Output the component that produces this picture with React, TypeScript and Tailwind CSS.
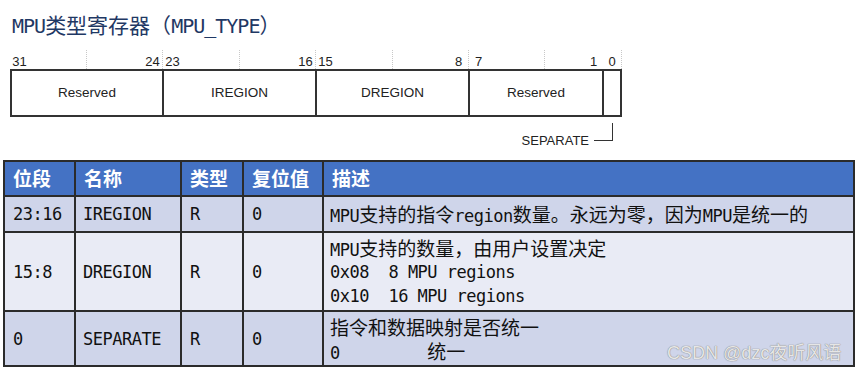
import React from 'react'

// split a string into ASCII / CJK runs so the Latin part can sit at half width
function Mixed({ text, latin, cjk }: { text: string; latin: string; cjk: string }) {
  const parts = text.match(/[\x00-\x7f]+|[^\x00-\x7f]+/g) ?? []
  return (
    <>
      {parts.map((p, i) =>
        /^[\x00-\x7f]/.test(p) ? (
          <span key={i} className={latin}>
            {p}
          </span>
        ) : (
          <span key={i} className={cjk}>
            {p}
          </span>
        )
      )}
    </>
  )
}

const bodyLatin = "inline-block leading-[24px] font-['DejaVu_Sans_Mono',monospace] text-[17px] tracking-[-0.5px]"
const bodyCjk = "inline-block leading-[24px] font-['Noto_Sans_CJK_SC',sans-serif] text-[19px]"

function Body({ text }: { text: string }) {
  return <Mixed text={text} latin={bodyLatin} cjk={bodyCjk} />
}

interface Row {
  bits: string
  name: string
  type: string
  reset: string
  desc: string[]
  bg: string
}

const rows: Row[] = [
  {
    bits: '23:16',
    name: 'IREGION',
    type: 'R',
    reset: '0',
    desc: ['MPU支持的指令region数量。永远为零，因为MPU是统一的'],
    bg: 'bg-[#cfd5ea]',
  },
  {
    bits: '15:8',
    name: 'DREGION',
    type: 'R',
    reset: '0',
    desc: ['MPU支持的数量，由用户设置决定', '0x08  8 MPU regions', '0x10  16 MPU regions'],
    bg: 'bg-[#e9ebf5]',
  },
  {
    bits: '0',
    name: 'SEPARATE',
    type: 'R',
    reset: '0',
    desc: ['指令和数据映射是否统一', '0         统一'],
    bg: 'bg-[#cfd5ea]',
  },
]

function BitLabel({ n }: { n: string }) {
  return <span className="w-[19px] text-center">{n}</span>
}

export default function App() {
  return (
    <div className="relative w-[863px] h-[373px] overflow-hidden bg-white text-[#111]">
      {/* Title */}
      <div className="pt-[10px] pl-[12px] h-[50px] leading-[28px] text-[#1f3864]">
        <Mixed
          text="MPU类型寄存器（MPU_TYPE）"
          latin="font-['DejaVu_Sans_Mono',monospace] text-[20px] tracking-[-1px]"
          cjk="font-['Noto_Sans_CJK_SC',sans-serif] text-[21px]"
        />
      </div>

      {/* Register diagram */}
      <div className="pl-[10px] font-['Liberation_Sans',Arial,sans-serif] text-[#222]">
        <div className="flex h-[19px] items-end text-[13px] leading-[15px]">
          <div className="flex w-[77px] h-full items-end border-r border-dotted border-[#c8c8c8]"><BitLabel n="31" /></div>
          <div className="flex w-[76px] h-full items-end justify-end border-r border-dotted border-[#c8c8c8]"><BitLabel n="24" /></div>
          <div className="flex w-[77px] h-full items-end border-r border-dotted border-[#c8c8c8]"><BitLabel n="23" /></div>
          <div className="flex w-[76px] h-full items-end justify-end border-r border-dotted border-[#c8c8c8]"><BitLabel n="16" /></div>
          <div className="flex w-[77px] h-full items-end border-r border-dotted border-[#c8c8c8]"><BitLabel n="15" /></div>
          <div className="flex w-[76px] h-full items-end justify-end border-r border-dotted border-[#c8c8c8]"><BitLabel n="8" /></div>
          <div className="flex w-[76px] h-full items-end border-r border-dotted border-[#c8c8c8]"><BitLabel n="7" /></div>
          <div className="flex w-[58px] h-full items-end justify-end"><BitLabel n="1" /></div>
          <div className="flex w-[19px] h-full items-end border-r border-dotted border-[#c8c8c8]"><BitLabel n="0" /></div>
        </div>
        <div className="flex w-[612px] h-[48px] border-2 border-[#333] text-[13.5px]">
          <div className="flex w-[152px] items-center justify-center border-r-2 border-[#333]">Reserved</div>
          <div className="flex w-[153px] items-center justify-center border-r-2 border-[#333]">IREGION</div>
          <div className="flex w-[153px] items-center justify-center border-r-2 border-[#333]">DREGION</div>
          <div className="flex w-[134px] items-center justify-center border-r-2 border-[#333]">Reserved</div>
          <div className="w-[16px]" />
        </div>
        <div className="flex w-[612px] h-[43px] justify-end pr-[9px]">
          <span className="mt-[17px] h-[14px] text-[13px] leading-[14px] mr-[5px]">SEPARATE</span>
          <div className="mt-[6px] w-[19px] h-[18px] border-r border-b border-[#333]" />
        </div>
      </div>

      {/* Field table */}
      <div className="ml-[3px] grid w-[852px] grid-cols-[69px_104px_60px_78px_529px] grid-rows-[33px_34px_77px_53px] gap-[2px] bg-[#2b2b2b] p-[2px]">
        {['位段', '名称', '类型', '复位值', '描述'].map((h) => (
          <div
            key={h}
            className="flex items-center bg-[#4472c4] pl-[8px] font-['Noto_Sans_CJK_SC',sans-serif] text-[19px] font-bold text-white"
          >
            {h}
          </div>
        ))}
        {rows.map((r) => (
          <React.Fragment key={r.bits}>
            <div className={`flex items-center pl-[8px] ${r.bg}`}><Body text={r.bits} /></div>
            <div className={`flex items-center pl-[7px] ${r.bg}`}><Body text={r.name} /></div>
            <div className={`flex items-center pl-[8px] ${r.bg}`}><Body text={r.type} /></div>
            <div className={`flex items-center pl-[8px] ${r.bg}`}><Body text={r.reset} /></div>
            <div className={`flex flex-col justify-center pl-[6px] ${r.bg}`}>
              {r.desc.map((line) => (
                <div key={line} className="h-[24px] leading-[24px] whitespace-pre">
                  <Body text={line} />
                </div>
              ))}
            </div>
          </React.Fragment>
        ))}
      </div>

      {/* Watermark */}
      <div className="absolute left-[667px] top-[340px] text-[18px] leading-[22px] text-[#e6e6e6] [text-shadow:0_0_1px_#8a8a8a,0_0_1px_#8a8a8a]">
        <span className="font-['Liberation_Sans',Arial,sans-serif]">CSDN @dzc</span>
        <span className="font-['Noto_Sans_CJK_SC',sans-serif]">夜听风语</span>
      </div>
    </div>
  )
}
